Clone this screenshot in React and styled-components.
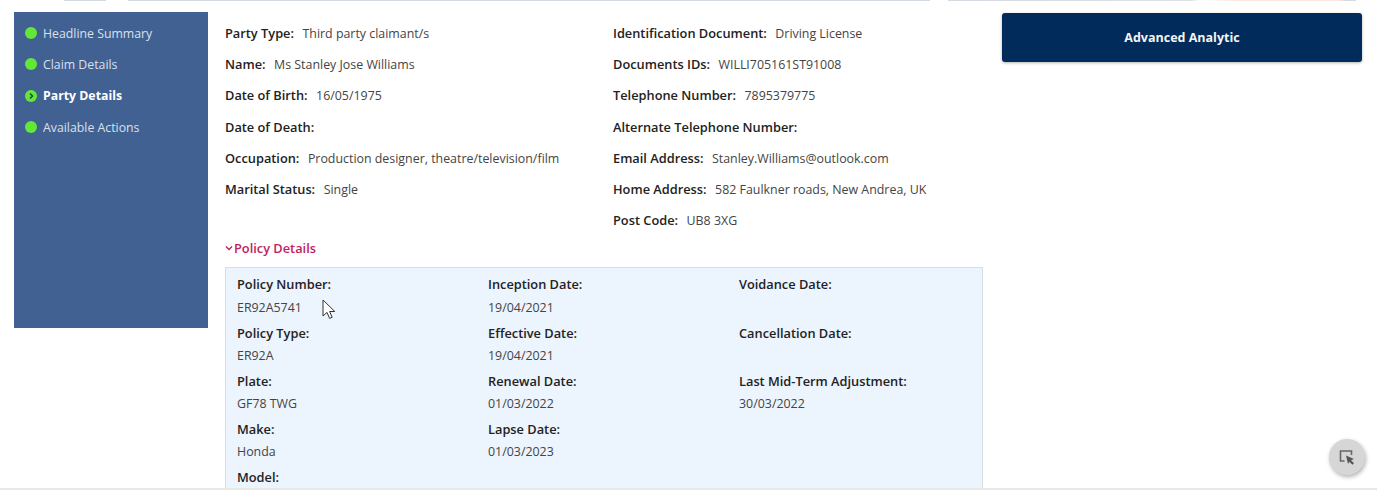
import React from "react";
import styled, { createGlobalStyle } from "styled-components";

const GlobalStyle = createGlobalStyle`
  html, body {
    margin: 0;
    padding: 0;
    height: 490px;
    overflow: hidden;
    background: #fff;
    font-family: "Open Sans", "Liberation Sans", sans-serif;
  }
`;

const Page = styled.div`
  height: 490px;
  box-sizing: border-box;
  overflow: hidden;
  position: relative;
  border-bottom: 2px solid #e8e8e4;
`;

// sliver of the header that is scrolled off the top of the page
const TopEdge = styled.div`
  height: 1px;
  background: linear-gradient(
    to right,
    #fff 64px,
    #d5dbe3 64px,
    #d5dbe3 106px,
    #fff 106px,
    #fff 128px,
    #d5dbe3 128px,
    #d5dbe3 930px,
    #fff 930px,
    #fff 948px,
    #d5dbe3 948px,
    #e2dfe3 1190px,
    #fff 1200px,
    #f7e9e0 1240px,
    #f7e9e0 1340px,
    #d5dbe3 1345px,
    #d5dbe3 1356px,
    #fff 1356px
  );
`;

const Layout = styled.div`
  display: grid;
  grid-template-columns: 194px 794px 360px;
  padding: 11px 0 0 14px;
`;

const Sidebar = styled.nav`
  height: 316px;
  box-sizing: border-box;
  background: #426193;
  padding: 11px 0 0 11px;
  display: flex;
  flex-direction: column;
  gap: 11.4px;
`;

const NavItem = styled.div`
  display: flex;
  align-items: center;
  gap: 6px;
  height: 20px;
  font-size: 12.3px;
  font-weight: ${(p) => (p.$active ? 700 : 400)};
  color: ${(p) => (p.$active ? "#fff" : "#d9e0ec")};
`;

const Dot = styled.span`
  width: 12px;
  height: 12px;
  border-radius: 50%;
  background: #63e83a;
  display: flex;
  align-items: center;
  justify-content: center;
`;

const Main = styled.main`
  min-width: 0;
  padding-left: 17px;
`;

const Columns = styled.div`
  display: grid;
  grid-template-columns: 388px 1fr;
`;

const FieldColumn = styled.div`
  display: flex;
  flex-direction: column;
`;

const Field = styled.div`
  height: 31.2px;
  padding-top: 12px;
  box-sizing: border-box;
  font-size: 12.4px;
  line-height: 18px;
  color: #444;
  white-space: nowrap;
`;

const Label = styled.b`
  font-size: 12.8px;
  font-weight: 600;
  color: #222;
  margin-right: 8.5px;
`;

const SectionToggle = styled.div`
  display: flex;
  align-items: center;
  gap: 1px;
  height: 18px;
  margin-top: 9px;
  font-size: 12.8px;
  font-weight: 600;
  color: #c0225f;
`;

const PolicyPanel = styled.section`
  width: 758px;
  margin-top: 10px;
  box-sizing: border-box;
  height: 240px;
  padding: 7px 11px 0;
  background: #ecf4fd;
  border: 1px solid #d6dee6;
  display: grid;
  grid-template-columns: 251px 251px 1fr;
  grid-auto-rows: 48.2px;
`;

const PolicyCell = styled.div`
  font-size: 12.4px;
  line-height: 18px;
  color: #444;
`;

const PolicyLabel = styled.div`
  font-size: 12.8px;
  font-weight: 600;
  color: #222;
  margin-bottom: 5.5px;
`;

const AnalyticButton = styled.button`
  width: 100%;
  height: 49px;
  margin-top: 1px;
  border: 0;
  border-radius: 3px;
  background: #002b5a;
  color: #f2f4f7;
  font-family: inherit;
  font-size: 12.5px;
  font-weight: 700;
  box-shadow: 0 1px 3px rgba(0, 0, 0, 0.3);
`;

const FloatingButton = styled.div`
  position: absolute;
  left: 1329px;
  top: 439px;
  width: 36px;
  height: 36px;
  border-radius: 50%;
  background: #d6d6d6;
  box-shadow: 1px 2px 4px rgba(0, 0, 0, 0.3);
  display: flex;
  align-items: center;
  justify-content: center;
`;

const Cursor = styled.svg`
  position: absolute;
  left: 322px;
  top: 299px;
`;

const left = [
  ["Party Type:", "Third party claimant/s"],
  ["Name:", "Ms Stanley Jose Williams"],
  ["Date of Birth:", "16/05/1975"],
  ["Date of Death:", ""],
  ["Occupation:", "Production designer, theatre/television/film"],
  ["Marital Status:", "Single"],
];

const right = [
  ["Identification Document:", "Driving License"],
  ["Documents IDs:", "WILLI705161ST91008"],
  ["Telephone Number:", "7895379775"],
  ["Alternate Telephone Number:", ""],
  ["Email Address:", "Stanley.Williams@outlook.com"],
  ["Home Address:", "582 Faulkner roads, New Andrea, UK"],
  ["Post Code:", "UB8 3XG"],
];

const policy = [
  ["Policy Number:", "ER92A5741"],
  ["Inception Date:", "19/04/2021"],
  ["Voidance Date:", ""],
  ["Policy Type:", "ER92A"],
  ["Effective Date:", "19/04/2021"],
  ["Cancellation Date:", ""],
  ["Plate:", "GF78 TWG"],
  ["Renewal Date:", "01/03/2022"],
  ["Last Mid-Term Adjustment:", "30/03/2022"],
  ["Make:", "Honda"],
  ["Lapse Date:", "01/03/2023"],
  ["", ""],
  ["Model:", ""],
];

const nav = ["Headline Summary", "Claim Details", "Party Details", "Available Actions"];

export default function App() {
  return (
    <Page>
      <GlobalStyle />
      <TopEdge />
      <Layout>
        <Sidebar>
          {nav.map((item) => {
            const active = item === "Party Details";
            return (
              <NavItem key={item} $active={active}>
                <Dot>
                  {active && (
                    <svg width="8" height="8" viewBox="0 0 8 8">
                      <path d="M3 1.5 5.5 4 3 6.5" fill="none" stroke="#2c4a3c" strokeWidth="1.6" />
                    </svg>
                  )}
                </Dot>
                {item}
              </NavItem>
            );
          })}
        </Sidebar>
        <Main>
          <Columns>
            <FieldColumn>
              {left.map(([k, v]) => (
                <Field key={k}>
                  <Label>{k}</Label>
                  {v}
                </Field>
              ))}
            </FieldColumn>
            <FieldColumn>
              {right.map(([k, v]) => (
                <Field key={k}>
                  <Label>{k}</Label>
                  {v}
                </Field>
              ))}
            </FieldColumn>
          </Columns>
          <SectionToggle>
            <svg width="8" height="8" viewBox="0 0 8 8">
              <path d="M1 2.5 4 5.5 7 2.5" fill="none" stroke="#c0225f" strokeWidth="1.4" />
            </svg>
            Policy Details
          </SectionToggle>
          <PolicyPanel>
            {policy.map(([k, v], i) => (
              <PolicyCell key={i}>
                <PolicyLabel>{k}</PolicyLabel>
                {v}
              </PolicyCell>
            ))}
          </PolicyPanel>
        </Main>
        <div>
          <AnalyticButton>Advanced Analytic</AnalyticButton>
        </div>
      </Layout>
      <Cursor width="16" height="22" viewBox="0 0 16 22">
        <path d="M1 1v16l4-3.6 2.6 6 2.6-1.1-2.6-5.8h5.2z" fill="#fff" stroke="#333" strokeWidth="1" />
      </Cursor>
      <FloatingButton>
        <svg width="18" height="18" viewBox="0 0 18 18">
          <path d="M6.5 13H2.5V3h11v4" fill="none" stroke="#666" strokeWidth="1.6" />
          <path d="M8 7.5 16 11l-3 1.2 3 3-1.6 1.5-3-3L10 16z" fill="#555" />
        </svg>
      </FloatingButton>
    </Page>
  );
}
